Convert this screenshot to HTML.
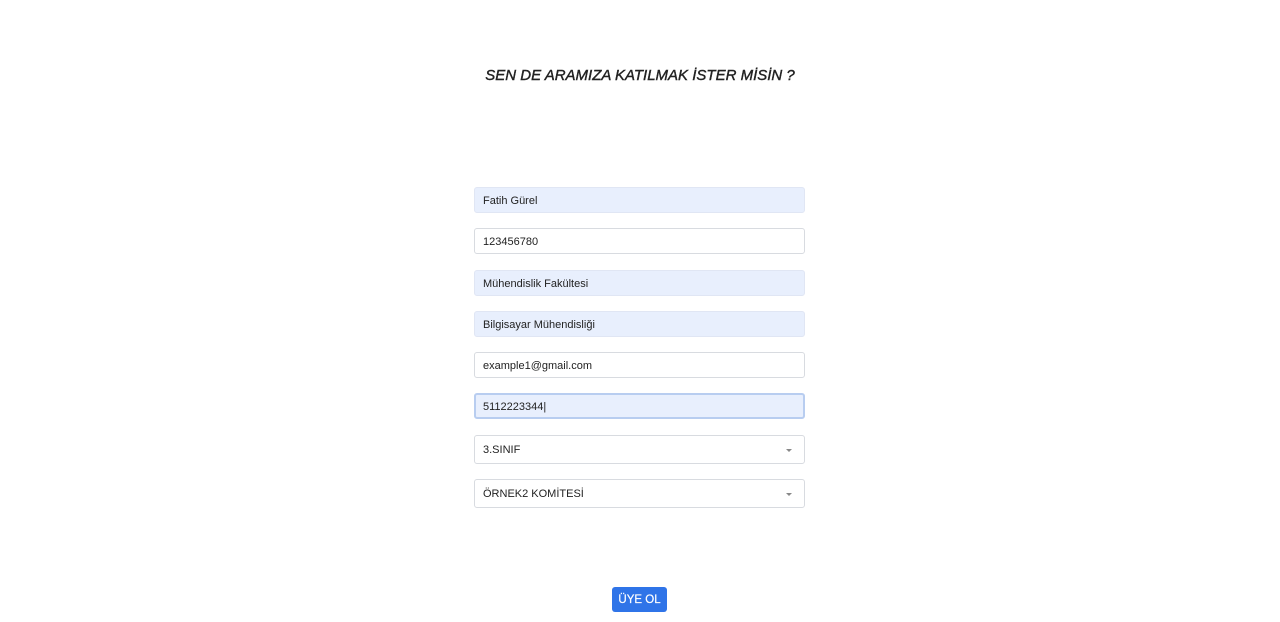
<!DOCTYPE html>
<html><head><meta charset="utf-8"><style>
body{margin:0;width:1280px;height:622px;background:#fff;font-family:"Liberation Sans",sans-serif;position:relative;overflow:hidden}
h1{position:absolute;top:67px;left:0;width:1280px;text-align:center;margin:0;font-size:15px;font-style:italic;font-weight:normal;color:#222;-webkit-text-stroke:0.4px #222}
.f{position:absolute;left:474px;border:1px solid #d8dbe0;border-radius:3px;font-size:11px;color:#222;line-height:26px;padding-left:8px;box-sizing:border-box;width:331px;height:26px}
.a{background:#e8effd;border-color:#e0e6f4}
.foc{border:2px solid #b8cdf0;background:#e8effd;line-height:24px;padding-left:7px}
.s{height:29px;line-height:29px}
.s:after{content:"";position:absolute;right:12px;top:13px;border:3px solid transparent;border-top:3px solid #888}
.b{position:absolute;left:612px;top:587px;width:55px;height:25px;background:#2f74e8;color:#fff;border-radius:3px;font-size:11.5px;text-align:center;line-height:26px;-webkit-text-stroke:0.2px #fff}
</style></head><body>
<h1>SEN DE ARAMIZA KATILMAK İSTER MİSİN ?</h1>
<div class="f a" style="top:187px">Fatih Gürel</div>
<div class="f" style="top:228px">123456780</div>
<div class="f a" style="top:270px">Mühendislik Fakültesi</div>
<div class="f a" style="top:311px">Bilgisayar Mühendisliği</div>
<div class="f" style="top:352px">example1@gmail.com</div>
<div class="f foc" style="top:393px">5112223344|</div>
<div class="f s" style="top:435px">3.SINIF</div>
<div class="f s" style="top:479px">ÖRNEK2 KOMİTESİ</div>
<div class="b">ÜYE OL</div>
</body></html>
